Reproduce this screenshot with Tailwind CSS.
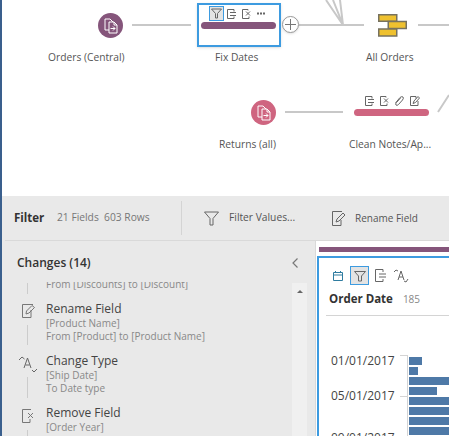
<!DOCTYPE html>
<html><head><meta charset="utf-8"><script src="https://cdn.jsdelivr.net/npm/@tailwindcss/browser@4"></script></head>
<body class="bg-white overflow-hidden">
<div class="w-[449px] h-[436px] overflow-hidden flex font-['Open_Sans',sans-serif] text-[#555]">
  <div class="w-[2px] shrink-0 bg-[#3a5f8d]"></div>
  <div class="flex-1 flex flex-col min-w-0">
    <!-- flow canvas -->
    <div class="relative h-[196px] shrink-0 bg-white">
      <svg class="absolute left-[-2px] top-0" width="449" height="196" fill="none" stroke="#c8c8c8" stroke-width="2">
        <path d="M132 25H191M299 25H364M285 112H343M418 25H449M326 0L343 25M333 0L343 25M340 0L343 25M438 112L449 95"/>
      </svg>
      <!-- Orders -->
      <div class="absolute left-[96px] top-[13px] w-[25px] h-[25px] rounded-full bg-[#85557b] flex items-center justify-center">
        <svg width="16" height="16" viewBox="0 0 16 16" fill="none" stroke="#fff" stroke-width="1"><path d="M6 12H2V1H7L10 4M6 4H11L14 7V15H6ZM11 4V7H14M7.500 10.500H12M10 8.500L12 10.500L10 12.500"/></svg>
      </div>
      <div class="absolute left-[46px] top-[49px] text-[10.250px] leading-[16px] whitespace-nowrap">Orders (Central)</div>
      <!-- Fix Dates -->
      <div class="absolute left-[195px] top-[3px] w-[84px] h-[44px] border-2 border-[#3d9be0] bg-white shadow-sm"></div>
      <div class="absolute left-[199px] top-[22px] w-[75px] h-[7px] rounded-full bg-[#85557b]"></div>
      <div class="absolute left-[207px] top-[6px] w-[15px] h-[15px] border border-[#3d9be0] bg-[#e3e3e3] flex items-center justify-center">
        <svg width="11" height="11" viewBox="0 0 11 11" fill="none" stroke="#666"><path d="M.5 1H10.500L6.500 5.500V10H4.500V5.500Z"/></svg>
      </div>
      <svg class="absolute left-[225px] top-[9px]" width="40" height="10" viewBox="0 0 40 10" fill="none" stroke="#666">
        <path d="M7 2.500V.5H.5V9.500H7V7.500M3 3.500H9M3 6.500H9"/>
        <path d="M21 1.500V.5H15.500V9.500H22V7.500M19 2.500L23 6.500M23 2.500L19 6.500"/>
        <path d="M30 4.500H32M33 4.500H35M36 4.500H38" stroke-width="2"/>
      </svg>
      <div class="absolute left-[213px] top-[49px] text-[10.250px] leading-[16px] whitespace-nowrap">Fix Dates</div>
      <!-- plus -->
      <div class="absolute left-[280px] top-[16px] w-[17px] h-[17px] rounded-full border border-[#999] bg-white shadow-sm flex items-center justify-center">
        <svg width="11" height="11" fill="none" stroke="#777"><path d="M5.500 0V11M0 5.500H11"/></svg>
      </div>
      <!-- All Orders -->
      <svg class="absolute left-[376px] top-[14px]" width="29" height="23" viewBox="0 0 29 23" fill="#efc12f" stroke="#77725f" stroke-width="1.500">
        <rect x=".75" y=".75" width="18" height="6.500"/><rect x="10.250" y="7.500" width="18" height="7"/><rect x=".75" y="15" width="18" height="7"/>
      </svg>
      <div class="absolute left-[364px] top-[49px] text-[10.250px] leading-[16px] whitespace-nowrap">All Orders</div>
      <!-- Returns -->
      <div class="absolute left-[249px] top-[100px] w-[25px] h-[25px] rounded-full bg-[#cf6580] flex items-center justify-center">
        <svg width="16" height="16" viewBox="0 0 16 16" fill="none" stroke="#fff" stroke-width="1"><path d="M6 12H2V1H7L10 4M6 4H11L14 7V15H6ZM11 4V7H14M7.500 10.500H12M10 8.500L12 10.500L10 12.500"/></svg>
      </div>
      <div class="absolute left-[217px] top-[136px] text-[10.250px] leading-[16px] whitespace-nowrap">Returns (all)</div>
      <!-- Clean -->
      <svg class="absolute left-[363px] top-[96px]" width="56" height="10" viewBox="0 0 56 10" fill="none" stroke="#666">
        <path d="M7 2.500V.5H.5V9.500H7V7.500M3 3.500H9M3 6.500H9"/>
        <path d="M21 1.500V.5H15.500V9.500H22V7.500M19 2.500L23 6.500M23 2.500L19 6.500"/>
        <path d="M30.500 7L35 1.500Q37 0 38 1Q39 2 37.500 4L33.500 8.500Q32 10 31 9Q30 8 31.500 6.500L35.500 2"/>
        <path d="M51 2.500V.5H45.500V9.500H53V5M48 7.500L49 5L53 .5L54.500 2L50.500 6.500Z"/>
      </svg>
      <div class="absolute left-[352px] top-[109px] w-[75px] h-[7px] rounded-full bg-[#cf6580]"></div>
      <div class="absolute left-[347px] top-[136px] text-[10.250px] leading-[16px] whitespace-nowrap">Clean Notes/Ap...</div>
    </div>
    <!-- toolbar -->
    <div class="h-[44px] shrink-0 bg-[#e9e9e9] flex items-center pl-[12px]">
      <span class="text-[11.500px] font-bold text-[#333] w-[43px]">Filter</span>
      <span class="text-[10.250px] text-[#777] w-[124px] whitespace-pre">21 Fields  603 Rows</span>
      <div class="w-px h-[34px] bg-[#d4d4d4]"></div>
      <svg class="ml-[22px]" width="15" height="15" viewBox="0 0 15 15" fill="none" stroke="#666"><path d="M.5 1H14.500L9 7.500V14H6V7.500Z"/></svg>
      <span class="ml-[10px] text-[10.250px] w-[103px] whitespace-nowrap">Filter Values...</span>
      <svg width="15" height="15" viewBox="0 0 15 15" fill="none" stroke="#666"><path d="M10 .5H.5V14.500H9V9M4 11L5 8L11 2L13 4L7 10Z"/></svg>
      <span class="ml-[8px] text-[10px] whitespace-nowrap">Rename Field</span>
    </div>
    <div class="flex-1 min-h-0 flex bg-[#e9e9e9]">
      <div class="flex-1 min-w-0 flex border-t border-[#d9d9d9] ml-[3px]">
      <!-- changes -->
      <div class="w-[311px] shrink-0 bg-[#e9e9e9] border-r border-[#d9d9d9] flex flex-col relative">
        <div class="h-[41px] shrink-0 pl-[12px] pt-[3px] flex items-center justify-between pr-[17px]">
          <span class="text-[12px] font-semibold text-[#333]">Changes (14)</span>
          <svg width="6" height="10" fill="none" stroke="#777" stroke-width="1.200"><path d="M5.500 .5L1 5L5.500 9.500"/></svg>
        </div>
        <div class="flex-1 min-h-0 overflow-hidden relative pl-[41px] text-[10px] leading-[13px] text-[#888]">
          <div class="mt-[-4px]">From [Discounts] to [Discount]</div>
          <div class="h-[9px]"></div>
          <div class="flex flex-col">
            <div class="text-[12px] leading-[17px] text-[#444]">Rename Field</div>
            <div>[Product Name]</div><div>From [Product] to [Product Name]</div>
            <div class="h-[9px]"></div>
            <div class="text-[12px] leading-[17px] text-[#444]">Change Type</div>
            <div>[Ship Date]</div><div>To Date type</div>
            <div class="h-[9px]"></div>
            <div class="text-[12px] leading-[17px] text-[#444]">Remove Field</div>
            <div>[Order Year]</div>
          </div>
          <svg class="absolute left-[11px] top-0" width="24" height="154" viewBox="0 0 24 154" fill="none" stroke="#777">
            <path d="M11.500 1V12M11.500 43V63M11.500 95V116M11.500 148V154" stroke="#ccc"/>
            <path d="M17 22.500H6.500V35.500H15V28M10 32L10.500 29L16 23.500L18.500 25.500L13 31Z"/>
            <path d="M11.500 76L15 86M11.500 76L8 86M9.500 83H13.500M3 78L6 75L8.500 77M16 88L18 90L21 87" stroke="#666"/>
            <path d="M15 127.500H6.500V140.500H14V137M12 131L17 136M17 131L12 136"/>
          </svg>
        </div>
        <div class="absolute right-[8px] top-[42px] bottom-0 w-[15px] bg-[#f0f0f0] flex justify-center pt-[7px]">
          <div class="w-0 h-0 border-x-[3px] border-x-transparent border-b-[3px] border-b-[#666]"></div>
        </div>
      </div>
      <!-- profile -->
      <div class="flex-1 min-w-0 bg-white pl-px pt-[6px] flex flex-col">
        <div class="h-[5px] shrink-0 ml-[2px] bg-[#85557b]"></div>
        <div class="flex-1 mt-[4px] border-2 border-r-0 border-b-0 border-[#3d9be0] pl-[9px] pt-[8px] overflow-hidden">
          <div class="flex items-center gap-[6px] h-[19px] pl-[4px]">
            <svg width="12" height="12" viewBox="0 0 12 12" fill="none" stroke="#2f7ca0"><path d="M1.500 2.500H10.500V10.500H1.500ZM1.500 5H10.500M3.500 1V3M8.500 1V3"/></svg>
            <div class="w-[19px] h-[19px] border border-[#3d9be0] bg-[#e3e3e3] flex items-center justify-center"><svg width="12" height="12" viewBox="0 0 12 12" fill="none" stroke="#666"><path d="M.5 1.500H11.500L7.500 6V11H4.500V6Z"/></svg></div>
            <svg width="12" height="13" viewBox="0 0 12 13" fill="none" stroke="#666"><path d="M8 3V.5H.5V12.500H8V10M4 5H11M4 8H11"/></svg>
            <svg width="16" height="14" viewBox="0 0 16 14" fill="none" stroke="#666"><path d="M8 2L11 11M8 2L5 11M6 8H10M1 3L3 1L5 2M11 12L13 13L15 10"/></svg>
          </div>
          <div class="mt-[5px] flex items-baseline gap-[10px] pl-[1px] h-[19px]">
            <span class="text-[11.500px] font-bold text-[#333]">Order Date</span><span class="text-[10px] text-[#888]">185</span>
          </div>
          <div class="h-px bg-[#d4d4d4] mt-[6px] -ml-[2px]"></div>
          <div class="flex mt-[39px]">
            <div class="w-[72px] shrink-0 text-[12px] leading-[17px] text-[#444] pl-[3px]">
              <div class="mt-[-3px]">01/01/2017</div>
              <div class="mt-[18px]">05/01/2017</div>
              <div class="mt-[25px]">09/01/2017</div>
            </div>
            <div class="w-[8px] relative border-r border-[#d4d4d4] shrink-0 h-[81px]">
              <div class="absolute left-0 right-0 top-0 h-px bg-[#d4d4d4]"></div>
              <div class="absolute left-0 right-0 top-[41px] h-px bg-[#d4d4d4]"></div>
            </div>
            <div class="flex flex-col gap-[2px] ml-[1px] pt-[2px] flex-1">
              <div class="h-[8px] w-[13px] bg-[#4e79a7]"></div>
              <div class="h-[8px] w-[9px] bg-[#4e79a7]"></div>
              <div class="h-[8px] w-full bg-[#4e79a7]"></div>
              <div class="h-[8px] w-[28px] bg-[#4e79a7]"></div>
              <div class="h-[8px] w-full bg-[#4e79a7]"></div>
              <div class="h-[8px] w-full bg-[#4e79a7]"></div>
              <div class="h-[8px] w-full bg-[#4e79a7]"></div>
              <div class="h-[8px] w-full bg-[#4e79a7]"></div>
            </div>
          </div>
        </div>
      </div>
      </div>
    </div>
  </div>
</div>
</body></html>
